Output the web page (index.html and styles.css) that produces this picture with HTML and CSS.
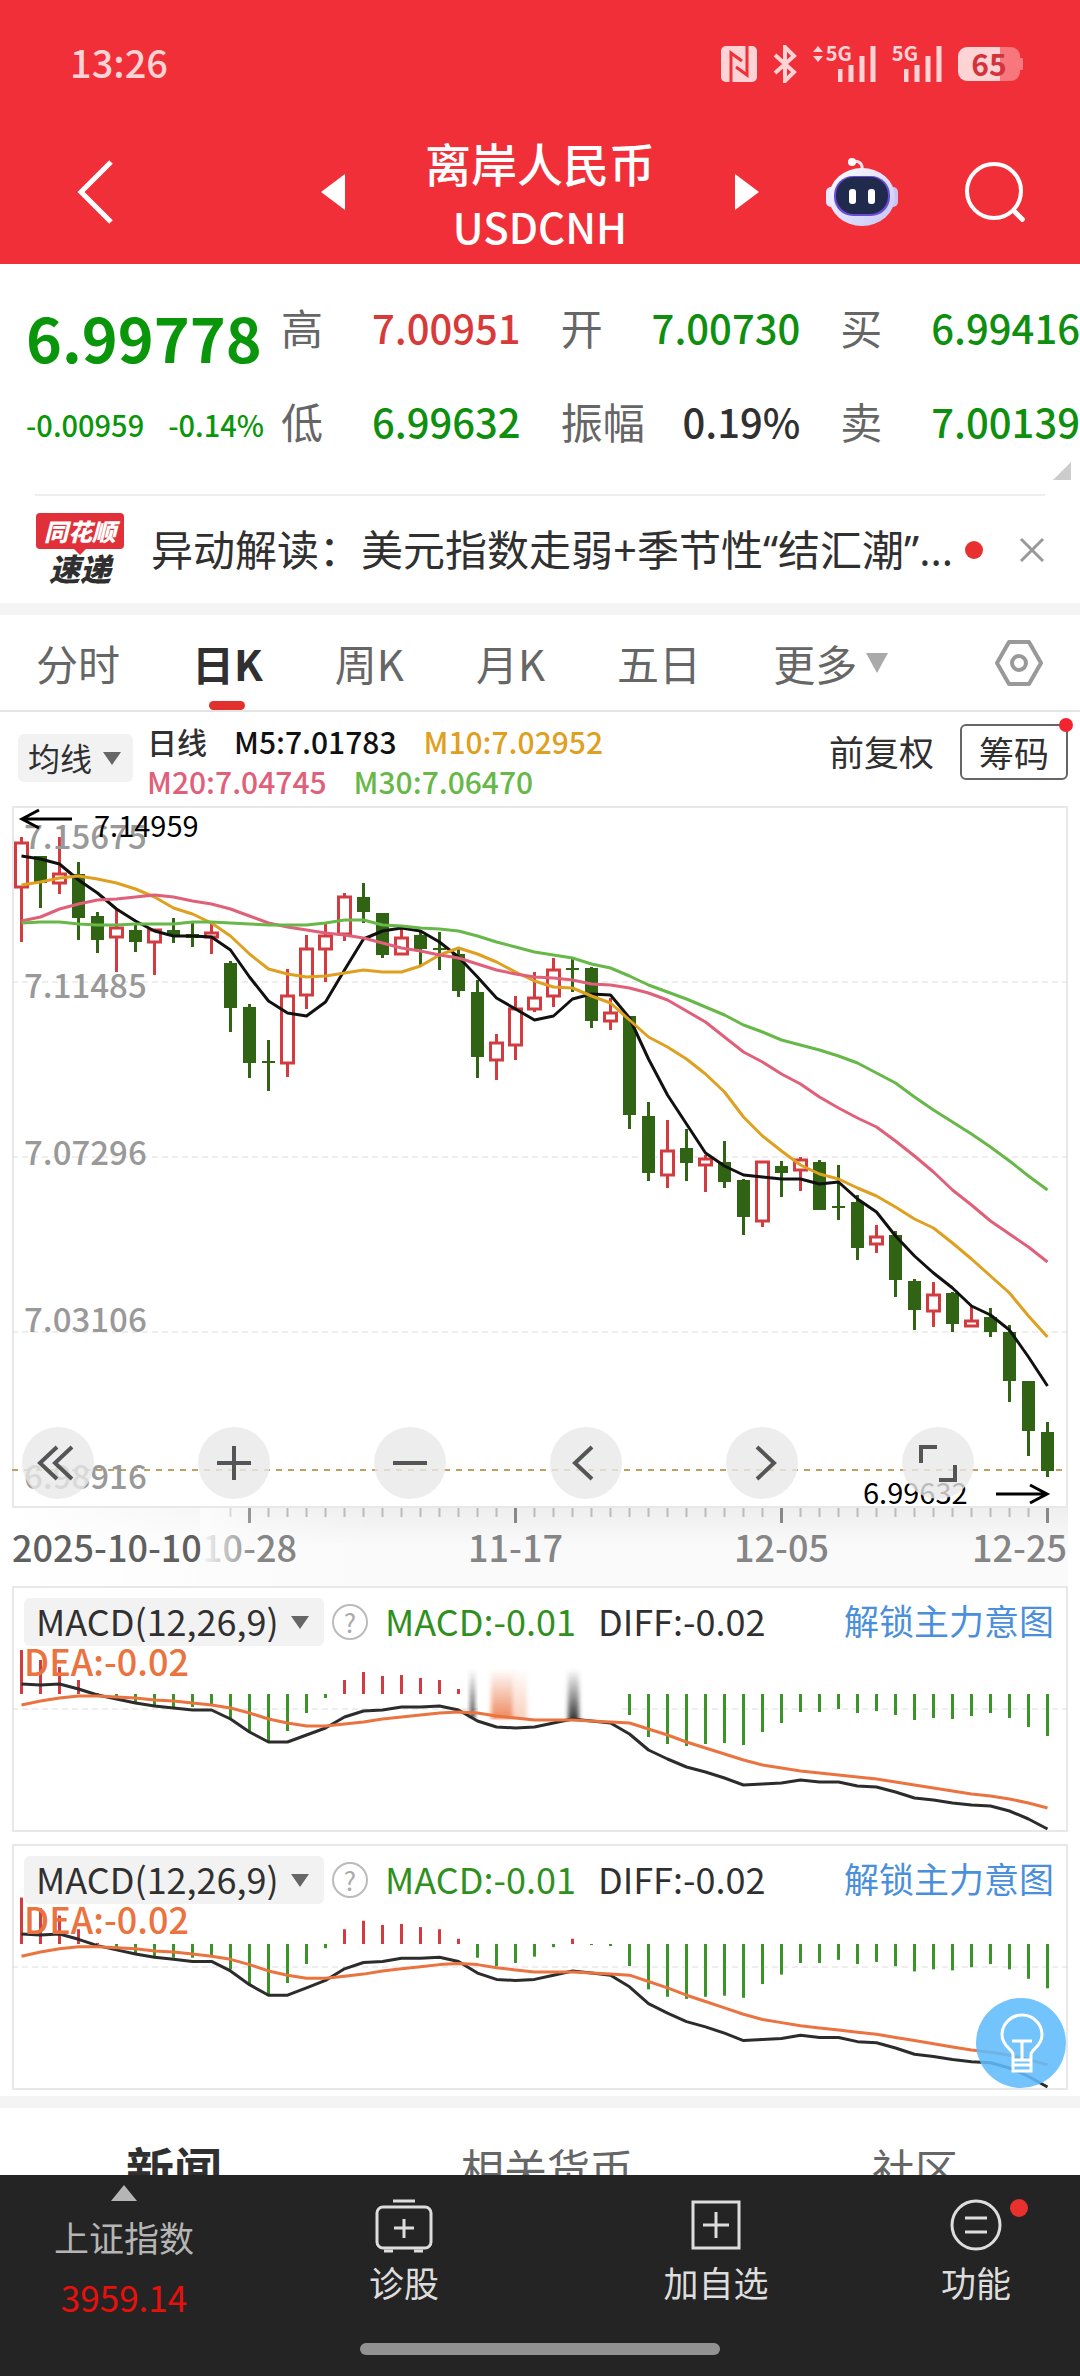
FILE: index.html
```html
<!DOCTYPE html>
<html lang="zh-CN">
<head>
    <meta charset="UTF-8">
    <meta name="viewport" content="width=device-width, initial-scale=1.0">
    <title>离岸人民币 USDCNH</title>
    <link rel="stylesheet" href="styles.css">
</head>
<body>

    <!-- Header -->
    <header class="header">
        <div class="status-bar">
            <span class="time">13:26</span>
            <div class="status-icons">
                <svg width="36" height="36" viewBox="0 0 36 36">
                    <rect width="36" height="36" rx="5" fill="#fdd3d5"/>
                    <path d="M10 36V7l11 8M26 0v29l-11-8" fill="none" stroke="#f12f38" stroke-width="3"/>
                </svg>
                <svg width="24" height="38" viewBox="0 0 24 38">
                    <path d="M2 10l19 17-9 9V2l9 9L2 28" fill="none" stroke="#fdd3d5" stroke-width="4"/>
                </svg>
                <div class="signal">
                    <svg class="updown" width="10" height="16" viewBox="0 0 10 16"><path d="M5 0l5 6H0zM5 16l5-6H0z"/></svg>
                    <span>5G</span>
                    <svg class="bars" width="38" height="36" viewBox="0 0 38 36"><path d="M2 23v13M13 19v17M24 10v26M35 0v36"/></svg>
                </div>
                <div class="signal">
                    <span>5G</span>
                    <svg class="bars" width="38" height="36" viewBox="0 0 38 36"><path d="M2 23v13M13 19v17M24 10v26M35 0v36"/></svg>
                </div>
                <div class="battery">65</div>
            </div>
        </div>
        <div class="title-bar">
            <div class="title-left">
                <button class="icon-btn" aria-label="返回">
                    <svg width="38" height="66" viewBox="0 0 38 66"><path d="M35 3L5 33l30 30" fill="none" stroke="#fff" stroke-width="5"/></svg>
                </button>
            </div>
            <div class="title-center">
                <button class="icon-btn" aria-label="上一个">
                    <svg width="24" height="36" viewBox="0 0 24 36"><path d="M24 0v36L0 18z" fill="#fff"/></svg>
                </button>
                <h1 class="title">离岸人民币<span>USDCNH</span></h1>
                <button class="icon-btn" aria-label="下一个">
                    <svg width="24" height="36" viewBox="0 0 24 36"><path d="M0 0v36l24-18z" fill="#fff"/></svg>
                </button>
            </div>
            <div class="title-right">
                <button class="icon-btn" aria-label="智能助手">
                    <svg width="74" height="72" viewBox="0 0 74 72">
                        <defs>
                            <linearGradient id="shell" x2="1" y2="1"><stop offset="0" stop-color="#fff"/><stop offset="1" stop-color="#c3c4f6"/></linearGradient>
                        </defs>
                        <path d="M37 15c1-7-2-10-9-10" fill="none" stroke="#fbe3ea" stroke-width="3"/>
                        <circle cx="27" cy="6" r="4" fill="#fff"/>
                        <rect x="1" y="31" width="12" height="20" rx="5" fill="#e9e7fb"/>
                        <rect x="61" y="31" width="12" height="20" rx="5" fill="#c9c4f3"/>
                        <ellipse cx="37" cy="41" rx="33" ry="29" fill="url(#shell)"/>
                        <rect x="9" y="20" width="56" height="40" rx="19" fill="#6a4bd8"/>
                        <rect x="11" y="21" width="52" height="37" rx="18" fill="#202a4c"/>
                        <rect x="24" y="33" width="7" height="15" rx="3" fill="#fff"/>
                        <rect x="43" y="33" width="7" height="15" rx="3" fill="#fff"/>
                    </svg>
                </button>
                <button class="icon-btn" aria-label="搜索">
                    <svg width="60" height="60" viewBox="0 0 60 60"><circle cx="29" cy="29" r="27" fill="none" stroke="#fff" stroke-width="4"/><path d="M48 48l11 11" stroke="#fff" stroke-width="5"/></svg>
                </button>
            </div>
        </div>
    </header>

    <!-- Quote -->
    <section class="quote">
        <div class="quote-main">
            <div class="price">6.99778</div>
            <div class="change"><span>-0.00959</span><span>-0.14%</span></div>
        </div>
        <dl class="quote-grid">
            <div><dt>高</dt><dd class="up">7.00951</dd></div>
            <div><dt>开</dt><dd class="down">7.00730</dd></div>
            <div><dt>买</dt><dd class="down">6.99416</dd></div>
            <div><dt>低</dt><dd class="down">6.99632</dd></div>
            <div><dt>振幅</dt><dd>0.19%</dd></div>
            <div><dt>卖</dt><dd class="down">7.00139</dd></div>
        </dl>
        <span class="corner"></span>
    </section>

    <!-- News flash -->
    <section class="flash">
        <div class="flash-logo">
            <span class="flash-brand">同花顺</span>
            <span class="flash-name">速递</span>
        </div>
        <a class="flash-text" href="#">异动解读：美元指数走弱+季节性“结汇潮”...</a>
        <span class="flash-dot"></span>
        <button class="icon-btn" aria-label="关闭">
            <svg width="26" height="26" viewBox="0 0 26 26"><path d="M2 2l22 22M24 2L2 24" stroke="#999" stroke-width="3"/></svg>
        </button>
    </section>

    <!-- Period tabs -->
    <nav class="tabs">
        <button>分时</button>
        <button class="active">日K</button>
        <button>周K</button>
        <button>月K</button>
        <button>五日</button>
        <button class="more">更多<svg width="22" height="20" viewBox="0 0 22 20"><path d="M0 0h22L11 20z" fill="#aaa"/></svg></button>
        <button class="settings" aria-label="设置">
            <svg width="50" height="48" viewBox="0 0 50 48">
                <path d="M15 3h20l12 21-12 21H15L3 24z" fill="none" stroke="#999" stroke-width="4" stroke-linejoin="round"/>
                <circle cx="25" cy="24" r="7" fill="none" stroke="#999" stroke-width="4"/>
            </svg>
        </button>
    </nav>

    <!-- Moving averages -->
    <section class="ma-bar">
        <div class="picker">
            <select aria-label="指标"><option>均线</option></select>
        </div>
        <div class="ma-values">
            <div><span>日线</span><span class="m5">M5:7.01783</span><span class="m10">M10:7.02952</span></div>
            <div><span class="m20">M20:7.04745</span><span class="m30">M30:7.06470</span></div>
        </div>
        <button class="adjust">前复权</button>
        <button class="chips">筹码</button>
    </section>

    <!-- Candle chart -->
    <section class="chart">
        <svg id="candles" viewBox="0 -1 1056 702"></svg>
        <div class="controls">
            <button aria-label="最左"><svg viewBox="0 0 72 72"><path d="M35 20L18 36l17 16M50 20L33 36l17 16"/></svg></button>
            <button aria-label="放大"><svg viewBox="0 0 72 72"><path d="M19 36h34M36 19v34"/></svg></button>
            <button aria-label="缩小"><svg viewBox="0 0 72 72"><path d="M19 36h34"/></svg></button>
            <button aria-label="左移"><svg viewBox="0 0 72 72"><path d="M42 20L25 36l17 16"/></svg></button>
            <button aria-label="右移"><svg viewBox="0 0 72 72"><path d="M31 20l17 16-17 16"/></svg></button>
            <button aria-label="全屏"><svg viewBox="0 0 72 72"><path d="M19 36V20h16M37 53h16V38"/></svg></button>
        </div>
    </section>
    <div class="axis">
        <svg id="axis" viewBox="0 0 1056 78"></svg>
    </div>

    <!-- MACD panels -->
    <section class="panel">
        <svg id="macd1" viewBox="0 -1 1056 246"></svg>
        <div class="panel-head">
            <div class="panel-row">
                <div class="picker wide"><select aria-label="副图一"><option>MACD(12,26,9)</option></select></div>
                <button class="help" aria-label="说明">?</button>
                <span class="macd">MACD:-0.01</span>
                <span>DIFF:-0.02</span>
                <a href="#">解锁主力意图</a>
            </div>
            <div class="dea">DEA:-0.02</div>
        </div>
    </section>
    <section class="panel">
        <svg id="macd2" viewBox="0 -1 1056 246"></svg>
        <div class="panel-head">
            <div class="panel-row">
                <div class="picker wide"><select aria-label="副图二"><option>MACD(12,26,9)</option></select></div>
                <button class="help" aria-label="说明">?</button>
                <span class="macd">MACD:-0.01</span>
                <span>DIFF:-0.02</span>
                <a href="#">解锁主力意图</a>
            </div>
            <div class="dea">DEA:-0.02</div>
        </div>
        <button class="bulb" aria-label="提示">
            <svg width="90" height="90" viewBox="0 0 90 90" fill="none" stroke="#fff" stroke-width="3">
                <path d="M37 62v-6c-1-5-11-8-11-19a20 20 0 0 1 40 0c0 11-10 14-11 19v6zM37 62v11h18V62M37 67h18M36 43h20M46 43v19"/>
            </svg>
        </button>
    </section>

    <!-- Content tabs -->
    <nav class="content-tabs">
        <button class="active">新闻</button>
        <button>相关货币</button>
        <button>社区</button>
    </nav>

    <!-- Bottom bar -->
    <footer class="bottom">
        <div class="bottom-items">
            <button class="index">
                <svg width="26" height="16" viewBox="0 0 26 16"><path d="M13 0l13 16H0z" fill="#b5b5b5"/></svg>
                <span>上证指数</span>
                <span class="index-value">3959.14</span>
            </button>
            <button>
                <svg width="58" height="54" viewBox="0 0 58 54"><rect x="2" y="8" width="54" height="41" rx="6"/><path d="M18 2h22M9 52h9M39 52h9M29 20v19M19 29h20"/></svg>
                <span>诊股</span>
            </button>
            <button>
                <svg width="50" height="54" viewBox="0 0 50 54"><rect x="2" y="3" width="46" height="46"/><path d="M25 13v26M12 26h26"/></svg>
                <span>加自选</span>
            </button>
            <button class="func">
                <svg width="54" height="54" viewBox="0 0 54 54"><circle cx="27" cy="26" r="24"/><path d="M16 19h22M16 33h22"/></svg>
                <span>功能</span>
            </button>
        </div>
        <div class="home-bar"></div>
    </footer>

    <script src="script.js"></script>
</body>
</html>
```
FILE: styles.css
```css
* {
    box-sizing: border-box;
}

body {
    margin: 0;
    background-color: #fff;
    color: #303030;
    font-family: "Noto Sans CJK SC", sans-serif;
}

button, select {
    margin: 0;
    padding: 0;
    border: none;
    background: none;
    color: inherit;
    font: inherit;
    cursor: pointer;
}

a {
    color: inherit;
    text-decoration: none;
}

svg {
    display: block;
}

.icon-btn {
    display: flex;
    flex: none;
}

/* Header */
.header {
    background-color: #f12f38;
    color: #fff;
    padding-bottom: 8px;
}

.status-bar {
    display: flex;
    align-items: center;
    justify-content: space-between;
    height: 128px;
    padding: 0 60px 0 70px;
    color: #fdd3d5;
}

.time {
    font-size: 38px;
    font-weight: 500;
    line-height: 40px;
    padding-bottom: 4px;
}

.status-icons {
    display: flex;
    align-items: center;
    gap: 16px;
}

.signal {
    display: flex;
    align-items: flex-start;
    font-size: 20px;
    font-weight: 700;
    line-height: 14px;
}

.signal .bars {
    margin-left: -14px;
    fill: none;
    stroke: #fdd3d5;
    stroke-width: 5px;
}

.signal .updown {
    margin-right: 3px;
    fill: #fdd3d5;
}

.battery {
    position: relative;
    width: 62px;
    height: 34px;
    border-radius: 9px;
    background: linear-gradient(90deg, #fdd3d5 68%, #f7777d 68%);
    color: #d5333c;
    font-size: 30px;
    font-weight: 700;
    line-height: 32px;
    text-align: center;
}

.battery::after {
    content: "";
    position: absolute;
    top: 11px;
    right: -3px;
    width: 3px;
    height: 12px;
    background-color: #f7777d;
}

.title-bar {
    display: grid;
    grid-template-columns: 1fr 438px 1fr;
    align-items: center;
    height: 128px;
}

.title-left {
    padding-left: 76px;
}

.title-center {
    display: flex;
    align-items: center;
    justify-content: space-between;
    height: 128px;
}

.title {
    align-self: flex-start;
    margin: 0;
    padding-top: 2px;
    font-size: 46px;
    font-weight: 500;
    line-height: 64px;
    text-align: center;
}

.title span {
    display: block;
    font-size: 42px;
}

.title-right {
    display: flex;
    align-items: center;
    justify-content: flex-end;
    gap: 66px;
    padding-right: 55px;
}

/* Quote */
.quote {
    position: relative;
    display: flex;
    margin-bottom: 26px;
    padding-top: 16px;
}

.quote-main {
    flex: none;
    width: 281px;
    padding-left: 26px;
    color: #0a960a;
    white-space: nowrap;
}

.price {
    font-size: 61px;
    font-weight: 700;
    line-height: 114px;
}

.change {
    display: flex;
    gap: 24px;
    font-size: 29px;
    font-weight: 500;
    line-height: 60px;
}

.quote-grid {
    display: grid;
    flex: 1;
    grid-template-columns: repeat(3, 1fr);
    column-gap: 40px;
    margin: 0;
    font-size: 42px;
    line-height: 94px;
}

.quote-grid div {
    display: flex;
    justify-content: space-between;
}

.quote-grid dt {
    color: #666;
}

.quote-grid dd {
    margin: 0;
    font-size: 40px;
    font-weight: 500;
}

.quote-grid .up {
    color: #d83a3a;
}

.quote-grid .down {
    color: #0f8f0f;
}

.corner {
    position: absolute;
    right: 9px;
    bottom: -12px;
    border-left: 18px solid transparent;
    border-bottom: 18px solid #ccc;
}

/* News flash */
.flash {
    display: flex;
    align-items: center;
    height: 109px;
    margin: 0 35px;
    border-top: 2px solid #eee;
}

.flash-logo {
    display: flex;
    flex: none;
    flex-direction: column;
    align-items: center;
    width: 90px;
    font-style: italic;
    font-weight: 900;
}

.flash-brand {
    position: relative;
    padding: 0 8px;
    border-radius: 4px;
    background-color: #e2303a;
    color: #fff;
    font-size: 24px;
    line-height: 36px;
}

.flash-brand::after {
    content: "";
    position: absolute;
    bottom: -6px;
    left: 50%;
    margin-left: -6px;
    border: 6px solid transparent;
    border-top-color: #e2303a;
    border-bottom: none;
}

.flash-name {
    font-size: 31px;
    line-height: 38px;
}

.flash-text {
    flex: 1;
    margin-left: 26px;
    padding-bottom: 4px;
    overflow: hidden;
    font-family: "Noto Sans", "Noto Sans CJK SC", sans-serif;
    font-size: 42px;
    white-space: nowrap;
}

.flash-dot {
    width: 18px;
    height: 18px;
    margin: 0 36px 0 12px;
    border-radius: 50%;
    background-color: #e8302f;
}

/* Period tabs */
.tabs {
    display: flex;
    gap: 72px;
    height: 109px;
    padding: 0 36px;
    border-top: 12px solid #f4f4f4;
    border-bottom: 2px solid #e4e4e4;
    color: #666;
    font-size: 42px;
    line-height: 93px;
}

.tabs .active {
    position: relative;
    color: #303030;
    font-weight: 700;
}

.tabs .active::after {
    content: "";
    position: absolute;
    bottom: 0;
    left: 50%;
    width: 36px;
    height: 9px;
    margin-left: -18px;
    border-radius: 5px;
    background-color: #e2302f;
}

.tabs .more {
    display: flex;
    align-items: center;
    gap: 9px;
}

.tabs .settings {
    margin-left: auto;
}

/* Moving averages */
.ma-bar {
    display: flex;
    align-items: flex-start;
    height: 94px;
    padding: 9px 12px 0 18px;
}

.picker {
    position: relative;
    height: 48px;
    margin-top: 13px;
    border-radius: 6px;
    background-color: #f2f2f2;
    font-size: 32px;
}

.picker select {
    height: 48px;
    padding: 0 40px 2px 10px;
    appearance: none;
}

.picker::after {
    content: "";
    position: absolute;
    top: 18px;
    right: 12px;
    border: 9px solid transparent;
    border-top: 13px solid #666;
    border-bottom: none;
    pointer-events: none;
}

.picker.wide {
    width: 300px;
    margin: 0;
    font-size: 36px;
}

.picker.wide::after {
    right: 15px;
}

.picker.wide select {
    width: 100%;
    padding: 0 0 4px 12px;
    color: #303030;
}

.ma-values {
    margin-left: 14px;
    font-size: 30px;
    font-weight: 500;
    line-height: 40px;
    white-space: nowrap;
}

.ma-values div {
    display: flex;
    gap: 27px;
}

.ma-values .m5 {
    color: #111;
}

.ma-values .m10 {
    color: #dfa01f;
}

.ma-values .m20 {
    color: #e0607a;
}

.ma-values .m30 {
    color: #67b848;
}

.adjust {
    margin-left: auto;
    font-size: 35px;
    line-height: 60px;
}

.chips {
    position: relative;
    width: 108px;
    height: 56px;
    margin: 3px 0 0 26px;
    border: 2px solid #666;
    border-radius: 6px;
    font-size: 35px;
    line-height: 50px;
}

.chips::after {
    content: "";
    position: absolute;
    top: -8px;
    right: -7px;
    width: 14px;
    height: 14px;
    border-radius: 50%;
    background-color: #f4242f;
}

/* Candle chart */
.chart {
    position: relative;
    margin: 0 12px;
}

.chart svg, .axis svg, .panel > svg {
    width: 100%;
}

.controls {
    position: absolute;
    right: 94px;
    bottom: 9px;
    left: 10px;
    display: flex;
    justify-content: space-between;
}

.controls button {
    width: 72px;
    height: 72px;
    border-radius: 50%;
    background-color: rgba(232, 232, 232, 0.8);
}

.controls path {
    fill: none;
    stroke: #555;
    stroke-width: 4px;
}

.axis {
    margin: 0 12px;
    background: linear-gradient(90deg, #fff, rgba(255, 255, 255, 0) 35%), linear-gradient(#eee, #fafafa 50%);
}

.frame {
    fill: none;
    stroke: #e8e8e8;
    stroke-width: 2px;
}

.grid {
    stroke: #ddd;
    stroke-width: 1px;
    stroke-dasharray: 6 4;
}

.last {
    stroke: #c0a060;
    stroke-width: 2px;
    stroke-dasharray: 6 6;
}

.scale {
    fill: #999;
    font-size: 33px;
    font-weight: 500;
}

.date {
    fill: #858585;
    font-size: 36px;
    font-weight: 500;
}

.date.first {
    fill: #606060;
}

.mark {
    fill: #000;
    font-size: 29px;
}

.arrow {
    fill: none;
    stroke: #000;
    stroke-width: 3px;
}

.line {
    fill: none;
    stroke-width: 3px;
    stroke-linejoin: round;
}

/* MACD panels */
.panel {
    position: relative;
    margin: 0 12px 12px;
}

.panel-head {
    position: absolute;
    top: 12px;
    right: 14px;
    left: 12px;
    font-size: 36px;
}

.panel-row {
    display: flex;
    align-items: center;
    height: 48px;
    line-height: 44px;
    white-space: nowrap;
}

.panel-row .help {
    width: 36px;
    height: 36px;
    margin: 0 17px 0 8px;
    border: 2px solid #bbb;
    border-radius: 50%;
    color: #aaa;
    font-size: 26px;
    line-height: 30px;
}

.panel-row span, .panel-row a {
    padding-bottom: 4px;
}

.panel-row .macd {
    margin-right: 22px;
    color: #2f9020;
}

.panel-row a {
    margin-left: auto;
    color: #4a8fdc;
    font-size: 35px;
}

.dea {
    color: #ea7340;
    font-weight: 500;
    line-height: 28px;
}

.bulb {
    position: absolute;
    right: 2px;
    bottom: 2px;
    width: 90px;
    height: 90px;
    border-radius: 50%;
    background-color: rgba(96, 188, 252, 0.88);
}

/* Content tabs */
.content-tabs {
    display: flex;
    align-items: center;
    justify-content: space-between;
    height: 130px;
    margin-top: -6px;
    padding: 0 122px 0 126px;
    border-top: 12px solid #f4f4f4;
    color: #666;
    font-size: 43px;
}

.content-tabs .active {
    color: #303030;
    font-size: 48px;
    font-weight: 700;
}

/* Bottom bar */
.bottom {
    position: fixed;
    right: 0;
    bottom: 0;
    left: 0;
    height: 201px;
    background-color: #242424;
    color: #ddd;
    font-size: 35px;
}

.bottom-items {
    display: grid;
    grid-template-columns: 248px 312px 312px 1fr;
    height: 168px;
}

.bottom-items button {
    position: relative;
    display: flex;
    flex-direction: column;
    align-items: center;
    padding-top: 24px;
    line-height: 58px;
}

.bottom-items button svg {
    fill: none;
    stroke: #ddd;
    stroke-width: 3px;
}

.bottom-items .index {
    padding-top: 10px;
    color: #b5b5b5;
    line-height: 60px;
}

.bottom-items .index svg {
    margin-bottom: 6px;
    stroke: none;
}

.bottom-items .index-value {
    color: #e8100c;
}

.func::after {
    content: "";
    position: absolute;
    top: 24px;
    left: 50%;
    width: 18px;
    height: 18px;
    margin-left: 34px;
    border-radius: 50%;
    background-color: #e8302f;
}

.home-bar {
    width: 360px;
    height: 12px;
    margin: 0 auto;
    border-radius: 6px;
    background-color: #929292;
}
```
FILE: script.js
```javascript
const RED = '#d23b3f';
const GREEN = '#306314';

// [rising, high, body top, body bottom, low]
const candles = [
    [1,30,36,80,135],[0,49,49,76,101],[1,30,67,76,87],[0,55,67,111,133],[0,105,109,133,146],
    [1,102,121,130,165],[0,117,123,135,145],[1,122,123,135,168],[0,111,123,128,136],[0,116,127,131,140],
    [1,117,126,130,147],[0,154,156,201,225],[0,197,200,256,271],[0,233,254,256,284],[1,162,189,256,270],
    [1,128,142,188,202],[1,117,129,142,175],[1,86,90,127,134],[0,76,90,105,116],[0,106,106,148,151],
    [1,122,131,147,148],[0,124,128,142,158],[0,125,141,143,163],[0,142,147,184,190],[0,173,185,250,271],
    [1,227,236,253,273],[1,189,202,238,253],[1,165,191,202,205],[1,151,163,189,200],[0,152,161,163,185],
    [0,160,161,214,221],[1,191,206,214,223],[0,209,209,308,322],[0,295,309,366,374],[1,313,344,368,381],
    [0,322,341,356,374],[1,348,352,358,385],[0,334,355,375,381],[0,372,373,410,428],[1,355,355,414,420],
    [0,354,359,366,390],[1,350,353,363,384],[0,353,355,403,403],[0,358,399,401,413],[0,388,395,441,453],
    [1,418,430,437,446],[0,424,428,473,490],[0,472,474,503,523],[1,475,488,504,520],[0,485,486,517,525],
    [1,499,514,519,519],[0,501,510,525,530],[0,518,525,574,595],[0,574,574,624,649],[0,615,625,664,670]
];

const averages = [
    ['#111', [49,52,57,73,86,102,114,124,129,129,130,143,170,194,206,209,195,163,132,124,121,124,135,150,170,191,202,213,209,192,187,188,211,252,288,317,346,359,368,370,372,372,377,375,392,405,429,449,466,481,499,508,523,550,579]],
    ['#dfa01f', [78,75,71,69,72,76,82,90,101,107,116,129,147,162,167,170,169,166,163,165,165,159,148,141,147,155,165,174,180,181,189,196,213,230,240,252,267,285,310,329,344,358,367,372,381,389,400,412,421,436,452,469,486,509,530]],
    ['#e0607a', [114,110,102,97,93,92,90,88,90,94,97,102,109,116,120,123,126,128,131,136,141,144,148,151,157,163,167,170,171,173,177,178,181,186,193,204,215,230,245,255,267,277,290,301,311,320,334,349,365,383,398,414,427,440,455]],
    ['#67b848', [116,115,115,117,118,118,117,117,117,115,115,116,117,118,118,118,116,113,113,118,119,121,122,124,129,135,140,145,148,151,157,161,169,178,185,192,200,208,218,225,233,238,243,249,256,266,276,290,303,315,327,340,354,369,383]]
];

const hist = [44,34,27,14,1,-3,-10,-12,-13,-13,-11,-24,-39,-48,-37,-19,-4,14,22,18,19,16,14,5,-13,-21,-18,-12,-3,5,-1,-2,-21,-43,-50,-52,-50,-49,-51,-38,-29,-18,-18,-15,-19,-17,-21,-26,-24,-25,-22,-19,-24,-33,-42];
const diff = [98,99,98,103,109,113,117,120,122,124,124,133,146,156,156,149,142,131,125,124,121,121,120,124,135,141,142,141,137,133,135,137,148,164,173,181,186,192,199,198,197,194,196,196,200,201,206,212,214,217,219,220,225,233,243];
const dea = [119,115,112,110,110,111,112,114,115,117,119,122,127,133,137,140,140,138,136,133,131,129,127,126,127,130,132,134,134,134,135,136,137,143,149,156,162,168,174,179,182,185,187,189,191,193,196,199,202,205,208,210,213,217,222];

const x = i => 9.5 + 19 * i;

function line(values, color) {
    const points = values.map((v, i) => `${x(i)},${v}`).join(' ');
    return `<polyline class="line" stroke="${color}" points="${points}"/>`;
}

function drawCandles() {
    let out = '<rect class="frame" x="1" y="0" width="1054" height="700"/>';
    [175, 350, 525].forEach(y => {
        out += `<path class="grid" d="M0 ${y}H1056"/>`;
    });
    out += '<path class="last" d="M0 663H1056"/>';
    candles.forEach(([up, high, top, bottom, low], i) => {
        const c = x(i);
        const color = up ? RED : GREEN;
        const wicks = up ? `M${c} ${high}V${top}M${c} ${bottom}V${low}` : `M${c} ${high}V${low}`;
        out += `<path d="${wicks}" stroke="${color}" stroke-width="3"/>`;
        if (up) {
            out += `<rect x="${c - 6}" y="${top}" width="12" height="${bottom - top}" fill="#fff" stroke="${color}" stroke-width="3"/>`;
        } else {
            out += `<rect x="${c - 6.5}" y="${top}" width="13" height="${bottom - top}" fill="${color}"/>`;
        }
    });
    averages.forEach(([color, values]) => {
        out += line(values, color);
    });
    [['7.15675', 42], ['7.11485', 191], ['7.07296', 358], ['7.03106', 525], ['6.98916', 682]].forEach(([t, y]) => {
        out += `<text class="scale" x="12" y="${y}">${t}</text>`;
    });
    out += '<text class="mark" x="82" y="30">7.14959</text><path class="arrow" d="M60 12H10M27 3L10 12l17 9"/>';
    out += '<text class="mark" x="851" y="697">6.99632</text><path class="arrow" d="M984 687h50M1018 678l17 9-17 9"/>';
    document.getElementById('candles').innerHTML = out;
}

function drawAxis() {
    let out = '<defs><linearGradient id="fade"><stop offset="0" stop-color="#fcfcfc"/><stop offset="1" stop-color="#fcfcfc" stop-opacity="0"/></linearGradient></defs>';
    for (let i = 11; i < 55; i++) {
        const major = (i - 12) % 14 === 0;
        out += `<path d="M${x(i)} 0v${major ? 15 : 9}" stroke="${major ? '#888' : '#bbb'}" stroke-width="${major ? 3 : 2}"/>`;
    }
    out += `<text class="date" x="${x(12)}" y="54" text-anchor="middle">10-28</text>`;
    out += '<rect x="188" y="0" width="56" height="79" fill="url(#fade)"/>';
    out += '<text class="date first" x="0" y="54">2025-10-10</text>';
    out += `<text class="date" x="${x(26)}" y="54" text-anchor="middle">11-17</text>`;
    out += `<text class="date" x="${x(40)}" y="54" text-anchor="middle">12-05</text>`;
    out += '<text class="date" x="1055" y="54" text-anchor="end">12-25</text>';
    document.getElementById('axis').innerHTML = out;
}

function drawMacd(id, base, zoom, hidden) {
    const y = v => 242 - (243 - v) * zoom;
    let out = '<rect class="frame" x="1" y="0" width="1054" height="244"/><path class="grid" d="M0 122H1056"/>';
    hist.forEach((h, i) => {
        if (hidden && i > 23 && i < 32) return;
        out += `<path d="M${x(i)} ${base}v${-h * zoom}" stroke="${h > 0 ? RED : '#3a9428'}" stroke-width="3"/>`;
    });
    if (hidden) {
        // smeared section of the histogram
        out += `<defs>
            <linearGradient id="g1" x2="0" y2="1"><stop offset="0" stop-color="#444" stop-opacity="0"/><stop offset="1" stop-color="#333"/></linearGradient>
            <linearGradient id="g2" x2="0" y2="1"><stop offset="0" stop-color="#ea7340" stop-opacity="0"/><stop offset="1" stop-color="#ea7340" stop-opacity="0.85"/></linearGradient>
            <filter id="soft" x="-50%" width="200%"><feGaussianBlur stdDeviation="2 1"/></filter>
        </defs>
        <rect x="466" y="84" width="144" height="44" fill="#fff"/>
        <rect x="458" y="82" width="5" height="49" fill="url(#g1)" filter="url(#soft)"/>
        <rect x="479" y="82" width="22" height="50" fill="url(#g2)" filter="url(#soft)"/>
        <rect x="501" y="82" width="14" height="50" fill="url(#g2)" filter="url(#soft)" opacity="0.4"/>
        <rect x="556" y="82" width="11" height="51" fill="url(#g1)" filter="url(#soft)"/>`;
    }
    out += line(diff.map(y), '#2c2c2c') + line(dea.map(y), '#ea7340');
    document.getElementById(id).innerHTML = out;
}

drawCandles();
drawAxis();
drawMacd('macd1', 107, 1, true);
drawMacd('macd2', 99, 1.055, false);
```
